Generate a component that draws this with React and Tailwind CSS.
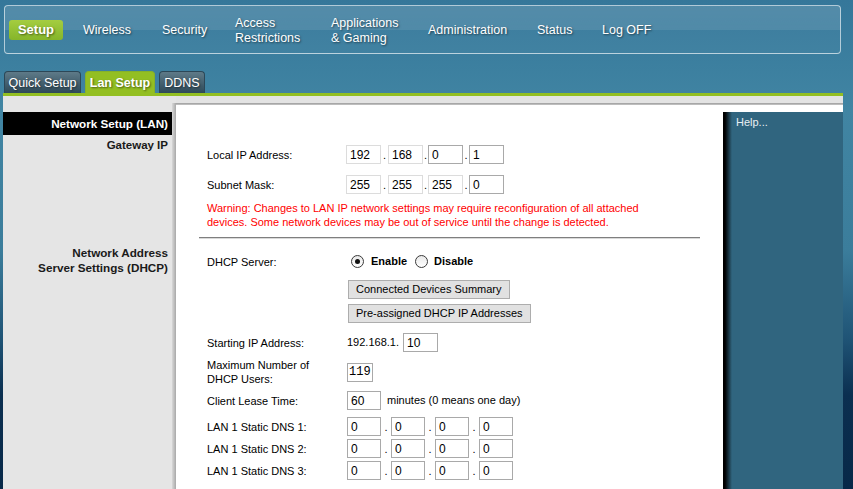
import React from "react";

const SH = "[text-shadow:1px_1px_2px_rgba(0,0,0,0.5)]";

function Inp({ v, w = "w-[35px]", on = true, mono = false }) {
  return (
    <input
      readOnly
      value={v}
      className={`${w} h-[19px] border ${on ? "border-[#a9a9a9]" : "border-[#dcdcdc]"} bg-white ${mono ? "px-[1px] text-[12px] font-['Liberation_Mono',monospace]" : "px-[3px] text-[12px] font-['Liberation_Sans',Arial,sans-serif]"} text-black outline-none`}
    />
  );
}

function Dot({ w = "w-[6px]" }) {
  return <span className={`${w} text-[11px] text-black text-center leading-none self-end pb-[3px]`}>.</span>;
}

function Radio({ checked }) {
  return (
    <span className="w-[13px] h-[13px] rounded-full border border-[#3a3a3a] bg-[linear-gradient(to_bottom,#e9e9e9,#ffffff)] flex items-center justify-center">
      {checked && <span className="w-[5px] h-[5px] rounded-full bg-[#111]" />}
    </span>
  );
}

function Row({ label, children, h = "h-[19px]", mt = "", lw = "w-[140px]" }) {
  return (
    <div className={`flex items-center ${h} ${mt} pl-[31px]`}>
      <div className={`${lw} text-[11px] leading-[14px] text-black`}>{label}</div>
      <div className="flex items-center">{children}</div>
    </div>
  );
}

function Dns({ label, mt }) {
  return (
    <Row label={label} mt={mt}>
      <Inp v="0" w="w-[34px]" />
      <Dot w="w-[10px]" />
      <Inp v="0" w="w-[34px]" />
      <Dot w="w-[10px]" />
      <Inp v="0" w="w-[34px]" />
      <Dot w="w-[10px]" />
      <Inp v="0" w="w-[34px]" />
    </Row>
  );
}

export default function App() {
  const navItems = [
    [["Wireless"], "w-[79px]"],
    [["Security"], "w-[73px]"],
    [["Access", "Restrictions"], "w-[96px]"],
    [["Applications", "& Gaming"], "w-[97px]"],
    [["Administration"], "w-[109px]"],
    [["Status"], "w-[65px]"],
    [["Log OFF"], "w-[80px]"],
  ];
  return (
    <div className="w-[853px] h-[489px] overflow-hidden bg-[linear-gradient(to_bottom,#35779a_0px,#4185a3_110px,#3b7d9b_250px,#1f5375_340px,#0b2f50_395px,#072848_489px)] font-['Liberation_Sans',Arial,sans-serif]">
      {/* top navigation */}
      <div className="ml-[4px] mt-[5px] w-[837px] h-[49px] rounded-[4px] border border-white/60 bg-[linear-gradient(to_bottom,rgba(255,255,255,0.15)_0%,rgba(255,255,255,0.12)_52%,rgba(255,255,255,0.03)_52%,rgba(255,255,255,0.03)_100%)]">
        <div className="flex items-center h-full pl-[4px]">
          <div className={`w-[54px] h-[20px] mt-[1px] rounded-[3px] bg-[linear-gradient(to_bottom,#a4cd40,#85b52a)] flex items-center justify-center text-white font-bold text-[13px] ${SH}`}>
            Setup
          </div>
          <div className="flex items-center ml-[20px] pt-[2px]">
            {navItems.map(([it, w], i) => (
              <div key={i} className={`${w} text-white text-[12.5px] leading-[15px] ${SH}`}>
                {it.map((l, j) => (
                  <div key={j} className="whitespace-nowrap">{l}</div>
                ))}
              </div>
            ))}
          </div>
        </div>
      </div>

      {/* main container */}
      <div className="ml-[3px] w-[840px] mt-[17px]">
        {/* tabs */}
        <div className="flex items-end gap-[4px] pl-[1px] h-[22px]">
          <div className={`w-[77px] h-[22px] pt-[1px] rounded-t-[4px] border border-b-0 border-[#2c4757] bg-[linear-gradient(to_bottom,#5e7a88,#2e4a59)] text-white text-[12.5px] flex items-center justify-center ${SH}`}>
            Quick Setup
          </div>
          <div className={`w-[70px] h-[22px] pt-[1px] rounded-t-[4px] border border-b-0 border-[#86b12a] bg-[#93bf22] text-white font-bold text-[12.5px] flex items-center justify-center ${SH}`}>
            Lan Setup
          </div>
          <div className={`w-[46px] h-[22px] pt-[1px] rounded-t-[4px] border border-b-0 border-[#2c4757] bg-[linear-gradient(to_bottom,#5e7a88,#2e4a59)] text-white text-[12.5px] flex items-center justify-center ${SH}`}>
            DDNS
          </div>
        </div>
        <div className="h-[3px] bg-[#93bf22]" />

        {/* body */}
        <div className="flex bg-[#e5e5e5] h-[393px]">
          {/* left column */}
          <div className="w-[169px] pt-[16px]">
            <div className="h-[23px] bg-black text-white font-bold text-[11.7px] flex items-center justify-end pr-[4px]">
              Network Setup (LAN)
            </div>
            <div className="mt-[3px] pr-[4px] text-right font-bold text-[11.5px] leading-[14px] text-[#1a1a1a]">Gateway IP</div>
            <div className="mt-[93px] pr-[4px] text-right font-bold text-[11.7px] leading-[15px] text-[#1a1a1a]">
              <div>Network Address</div>
              <div>Server Settings (DHCP)</div>
            </div>
          </div>
          {/* shadow */}
          <div className="w-[4px] mt-[7px] bg-[linear-gradient(to_right,#d8d8d8,#a8a8a8)]" />
          {/* right area */}
          <div className="flex-1 flex flex-col">
            <div className="h-[7px] bg-[#e3e3e3]" />
            <div className="h-[2px] bg-[linear-gradient(to_bottom,#9c9c9c,#c8c8c8)]" />
            <div className="flex-1 bg-white flex">
              {/* content */}
              <div className="w-[547px] pt-[40px]">
                <Row label="Local IP Address:" lw="w-[139px]">
                  <Inp v="192" on={false} />
                  <Dot w="w-[7px]" />
                  <Inp v="168" on={false} />
                  <Dot w="w-[5px]" />
                  <Inp v="0" />
                  <Dot />
                  <Inp v="1" />
                </Row>
                <Row label="Subnet Mask:" mt="mt-[11px]" lw="w-[139px]">
                  <Inp v="255" on={false} />
                  <Dot w="w-[7px]" />
                  <Inp v="255" on={false} />
                  <Dot w="w-[5px]" />
                  <Inp v="255" on={false} />
                  <Dot />
                  <Inp v="0" />
                </Row>
                <div className="mt-[7px] pl-[31px] text-[11px] leading-[14px] text-[#ff0000] whitespace-nowrap">
                  <div>Warning: Changes to LAN IP network settings may require reconfiguration of all attached</div>
                  <div>devices. Some network devices may be out of service until the change is detected.</div>
                </div>
                <div className="mt-[8px] ml-[23px] w-[501px]">
                  <div className="h-[1px] bg-[#7f7f7f]" />
                  <div className="h-[1px] bg-[#d9d9d9]" />
                </div>
                <Row label="DHCP Server:" mt="mt-[13px]">
                  <span className="ml-[4px]" />
                  <Radio checked />
                  <span className="ml-[7px] text-[11px] font-bold text-black">Enable</span>
                  <span className="ml-[8px]" />
                  <Radio />
                  <span className="ml-[6px] text-[11px] font-bold text-black">Disable</span>
                </Row>
                <div className="pl-[172px] mt-[9px] flex">
                  <div className="h-[19px] px-[7px] bg-[#e1e1e1] border border-[#adadad] text-[11px] text-black flex items-center whitespace-nowrap">
                    Connected Devices Summary
                  </div>
                </div>
                <div className="pl-[172px] mt-[5px] flex">
                  <div className="h-[19px] px-[7px] bg-[#e1e1e1] border border-[#adadad] text-[11px] text-black flex items-center whitespace-nowrap">
                    Pre-assigned DHCP IP Addresses
                  </div>
                </div>
                <Row label="Starting IP Address:" mt="mt-[10px]">
                  <span className="text-[11px] text-black">192.168.1.</span>
                  <span className="ml-[4px]" />
                  <Inp v="10" />
                </Row>
                <Row
                  label={
                    <>
                      <div>Maximum Number of</div>
                      <div>DHCP Users:</div>
                    </>
                  }
                  h="h-[28px]"
                  mt="mt-[6px]"
                >
                  <Inp v="119" w="w-[26px]" mono />
                </Row>
                <Row label="Client Lease Time:" mt="mt-[5px]">
                  <Inp v="60" w="w-[34px]" />
                  <span className="ml-[6px] text-[11px] text-black whitespace-nowrap">minutes (0 means one day)</span>
                </Row>
                <Dns label="LAN 1 Static DNS 1:" mt="mt-[7px]" />
                <Dns label="LAN 1 Static DNS 2:" mt="mt-[3px]" />
                <Dns label="LAN 1 Static DNS 3:" mt="mt-[3px]" />
              </div>
              {/* help */}
              <div className="w-[120px] mt-[7px] bg-[linear-gradient(to_right,#000_0px,#000_2px,#30657f_9px,#30657f_100%)] pl-[13px] pt-[2px]">
                <div className="text-[11px] text-[#e8eff3]">Help...</div>
              </div>
            </div>
          </div>
        </div>
      </div>
    </div>
  );
}
